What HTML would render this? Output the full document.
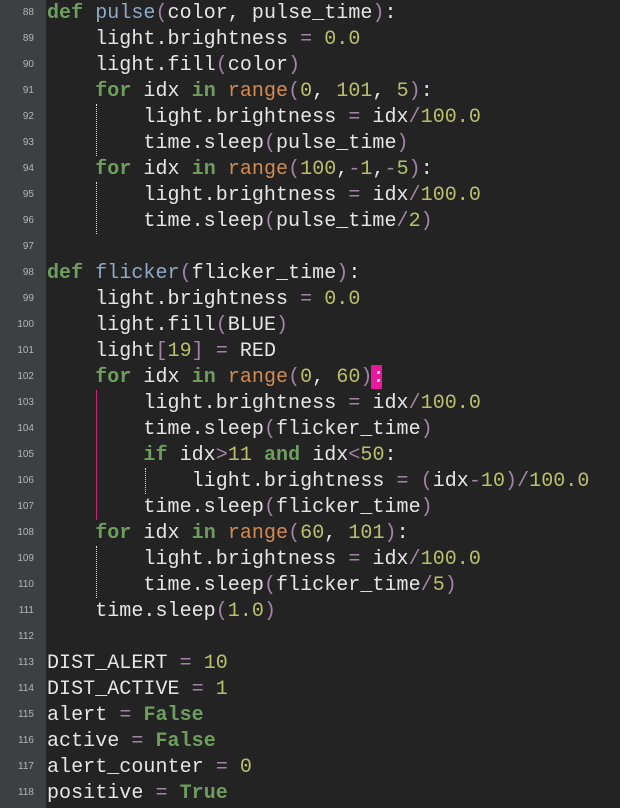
<!DOCTYPE html>
<html><head><meta charset="utf-8"><style>
body{margin:0;width:620px;height:808px;background:#232323;overflow:hidden;position:relative;font-family:"Liberation Mono",monospace;}
#g{position:absolute;left:0;top:0;width:46px;height:808px;background:#3d4043;}
.n{position:absolute;left:0;width:34px;text-align:right;font-family:"Liberation Sans",sans-serif;font-size:10px;color:#b0b4b8;height:26px;line-height:26px;}
#c{position:absolute;left:47px;top:1px;font-size:20px;line-height:26px;color:#e6e6e6;white-space:pre;letter-spacing:0.05px}
.k{color:#6e9e5e;font-weight:bold}.f{color:#8eaac8}.p{color:#a483a8}.d{color:#b9c06a}.r{color:#d58a52}
.gd{position:absolute;width:0;border-left:1px dotted #ddd}
.gp{position:absolute;width:0;border-left:1px solid #d0207f}
#hl{position:absolute;left:371px;top:365px;width:11px;height:24px;background:#e5199a}
</style></head><body>
<div id="g"></div>
<div id="hl"></div>
<div class="gd" style="left:96px;top:104px;height:52px"></div>
<div class="gd" style="left:96px;top:182px;height:52px"></div>
<div class="gp" style="left:96px;top:390px;height:130px"></div>
<div class="gd" style="left:145px;top:468px;height:26px"></div>
<div class="gd" style="left:96px;top:546px;height:52px"></div>
<div id="c"><span class="k">def</span> <span class="f">pulse</span><span class="p">(</span>color, pulse_time<span class="p">)</span>:
    light.brightness <span class="p">=</span> <span class="d">0.0</span>
    light.fill<span class="p">(</span>color<span class="p">)</span>
    <span class="k">for</span> idx <span class="k">in</span> <span class="r">range</span><span class="p">(</span><span class="d">0</span>, <span class="d">101</span>, <span class="d">5</span><span class="p">)</span>:
        light.brightness <span class="p">=</span> idx<span class="p">/</span><span class="d">100.0</span>
        time.sleep<span class="p">(</span>pulse_time<span class="p">)</span>
    <span class="k">for</span> idx <span class="k">in</span> <span class="r">range</span><span class="p">(</span><span class="d">100</span>,<span class="p">-</span><span class="d">1</span>,<span class="p">-</span><span class="d">5</span><span class="p">)</span>:
        light.brightness <span class="p">=</span> idx<span class="p">/</span><span class="d">100.0</span>
        time.sleep<span class="p">(</span>pulse_time<span class="p">/</span><span class="d">2</span><span class="p">)</span>

<span class="k">def</span> <span class="f">flicker</span><span class="p">(</span>flicker_time<span class="p">)</span>:
    light.brightness <span class="p">=</span> <span class="d">0.0</span>
    light.fill<span class="p">(</span>BLUE<span class="p">)</span>
    light<span class="p">[</span><span class="d">19</span><span class="p">]</span> <span class="p">=</span> RED
    <span class="k">for</span> idx <span class="k">in</span> <span class="r">range</span><span class="p">(</span><span class="d">0</span>, <span class="d">60</span><span class="p">)</span>:
        light.brightness <span class="p">=</span> idx<span class="p">/</span><span class="d">100.0</span>
        time.sleep<span class="p">(</span>flicker_time<span class="p">)</span>
        <span class="k">if</span> idx<span class="p">&gt;</span><span class="d">11</span> <span class="k">and</span> idx<span class="p">&lt;</span><span class="d">50</span>:
            light.brightness <span class="p">=</span> <span class="p">(</span>idx<span class="p">-</span><span class="d">10</span><span class="p">)/</span><span class="d">100.0</span>
        time.sleep<span class="p">(</span>flicker_time<span class="p">)</span>
    <span class="k">for</span> idx <span class="k">in</span> <span class="r">range</span><span class="p">(</span><span class="d">60</span>, <span class="d">101</span><span class="p">)</span>:
        light.brightness <span class="p">=</span> idx<span class="p">/</span><span class="d">100.0</span>
        time.sleep<span class="p">(</span>flicker_time<span class="p">/</span><span class="d">5</span><span class="p">)</span>
    time.sleep<span class="p">(</span><span class="d">1.0</span><span class="p">)</span>

DIST_ALERT <span class="p">=</span> <span class="d">10</span>
DIST_ACTIVE <span class="p">=</span> <span class="d">1</span>
alert <span class="p">=</span> <span class="k">False</span>
active <span class="p">=</span> <span class="k">False</span>
alert_counter <span class="p">=</span> <span class="d">0</span>
positive <span class="p">=</span> <span class="k">True</span></div>
<div class="n" style="top:0">88</div><div class="n" style="top:26px">89</div><div class="n" style="top:52px">90</div><div class="n" style="top:78px">91</div><div class="n" style="top:104px">92</div><div class="n" style="top:130px">93</div><div class="n" style="top:156px">94</div><div class="n" style="top:182px">95</div><div class="n" style="top:208px">96</div><div class="n" style="top:234px">97</div><div class="n" style="top:260px">98</div><div class="n" style="top:286px">99</div><div class="n" style="top:312px">100</div><div class="n" style="top:338px">101</div><div class="n" style="top:364px">102</div><div class="n" style="top:390px">103</div><div class="n" style="top:416px">104</div><div class="n" style="top:442px">105</div><div class="n" style="top:468px">106</div><div class="n" style="top:494px">107</div><div class="n" style="top:520px">108</div><div class="n" style="top:546px">109</div><div class="n" style="top:572px">110</div><div class="n" style="top:598px">111</div><div class="n" style="top:624px">112</div><div class="n" style="top:650px">113</div><div class="n" style="top:676px">114</div><div class="n" style="top:702px">115</div><div class="n" style="top:728px">116</div><div class="n" style="top:754px">117</div><div class="n" style="top:780px">118</div>
</body></html>
